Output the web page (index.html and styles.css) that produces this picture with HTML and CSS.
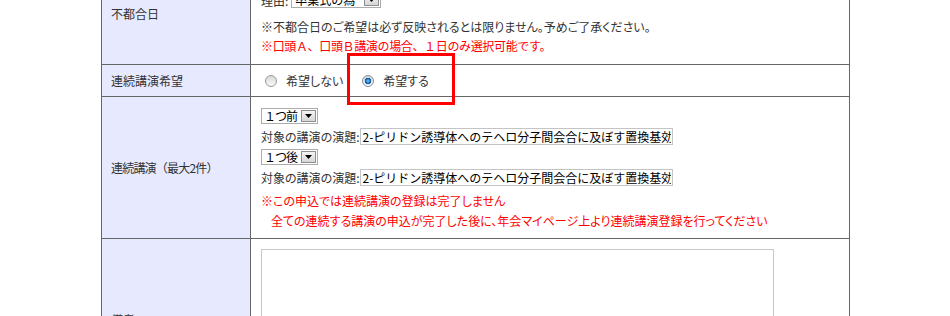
FILE: index.html
```html
<!DOCTYPE html>
<html lang="ja">
<head>
<meta charset="utf-8">
<title>講演申込</title>
<link rel="stylesheet" href="styles.css">
</head>
<body>
<div class="page">
  <div class="form">
    <div class="th">不都合日</div>
    <div class="td td-first">
      <div class="line reason">
        <span class="caption">理由:</span>
        <span class="select select-reason"><span class="sel-text">卒業式の為</span><span class="sel-btn"><svg width="7" height="4" viewBox="0 0 7 4"><polygon points="0,0 7,0 3.5,4" fill="#000"/></svg></span></span>
      </div>
      <p class="note">※不都合日のご希望は必ず反映されるとは限りません。予めご了承ください。</p>
      <p class="note red wide">※口頭Ａ、口頭Ｂ講演の場合、１日のみ選択可能です。</p>
    </div>

    <div class="th">連続講演希望</div>
    <div class="td td-radios">
      <label class="radio"><input type="radio" name="renzoku"><span>希望しない</span></label>
      <label class="radio"><input type="radio" name="renzoku" checked><span>希望する</span></label>
      <span class="annotation"></span>
    </div>

    <div class="th th-wide">連続講演（最大2件）</div>
    <div class="td td-series">
      <div class="line sel-line">
        <span class="select select-order"><span class="sel-text">１つ前</span><span class="sel-btn"><svg width="7" height="4" viewBox="0 0 7 4"><polygon points="0,0 7,0 3.5,4" fill="#000"/></svg></span></span>
      </div>
      <div class="line input-line">
        <span class="caption">対象の講演の演題:</span>
        <input class="title-input" type="text" value="2-ピリドン誘導体へのテヘロ分子間会合に及ぼす置換基効果">
      </div>
      <div class="line sel-line">
        <span class="select select-order"><span class="sel-text">１つ後</span><span class="sel-btn"><svg width="7" height="4" viewBox="0 0 7 4"><polygon points="0,0 7,0 3.5,4" fill="#000"/></svg></span></span>
      </div>
      <div class="line input-line">
        <span class="caption">対象の講演の演題:</span>
        <input class="title-input" type="text" value="2-ピリドン誘導体へのテヘロ分子間会合に及ぼす置換基効果">
      </div>
      <div class="warn">
        <p class="note red">※この申込では連続講演の登録は完了しません</p>
        <p class="note red indent">全ての連続する講演の申込が完了した後に、年会マイページ上より連続講演登録を行ってください</p>
      </div>
    </div>

    <div class="th">備考</div>
    <div class="td td-remarks">
      <textarea class="remarks"></textarea>
    </div>
  </div>
</div>
</body>
</html>
```

FILE: styles.css
```css
html, body {
  margin: 0;
  padding: 0;
  background: #fff;
}

body {
  font-family: "Noto Sans CJK JP", "Noto Sans", sans-serif;
  font-size: 12px;
  color: #333;
  font-feature-settings: "palt";
}

.page {
  margin-top: -39px;
  margin-left: 101px;
  width: 749px;
}

.form {
  display: grid;
  grid-template-columns: 149px 599px;
  border-left: 1px solid #666;
  border-top: 1px solid #666;
}

.th,
.td {
  border-right: 1px solid #666;
  border-bottom: 1px solid #666;
}

.th {
  background: #e7e9fe;
  display: flex;
  align-items: center;
  padding-left: 9px;
  color: #333;
}

.th-wide {
  font-feature-settings: normal;
  letter-spacing: -0.8px;
}

.td {
  padding: 0 10px;
}

.line {
  display: flex;
  align-items: center;
}

.caption {
  white-space: nowrap;
}

.note {
  margin: 0;
  line-height: 19px;
  white-space: nowrap;
}

.red {
  color: #f00;
}

.wide {
  font-feature-settings: normal;
  letter-spacing: -0.35px;
}

/* row 1 */
.td-first {
  padding-top: 28px;
  padding-bottom: 9px;
}

.reason {
  height: 20px;
  margin-bottom: 7px;
}

.select {
  display: inline-flex;
  align-items: center;
  box-sizing: border-box;
  height: 16px;
  border: 1px solid #acacac;
  background: #fff;
  color: #000;
  padding: 0 1px 0 3px;
}

.select-reason {
  width: 90px;
  margin-left: 3px;
}

.select-order {
  width: 57px;
  padding-left: 2px;
}

.sel-text {
  flex: 1;
  line-height: 14px;
  white-space: nowrap;
  font-feature-settings: normal;
}

.select-order .sel-text {
  letter-spacing: -1px;
}

.sel-btn {
  flex: none;
  box-sizing: border-box;
  width: 15px;
  height: 12px;
  border: 1px solid #8e8e8e;
  background: linear-gradient(#f4f4f4, #d6d6d6);
  display: flex;
  align-items: center;
  justify-content: center;
}

.sel-btn svg {
  display: block;
}

/* row 2 */
.td-radios {
  position: relative;
  display: flex;
  align-items: center;
  gap: 15px;
  padding-top: 6px;
  padding-bottom: 6px;
  height: 19px;
}

.radio {
  display: inline-flex;
  align-items: center;
  gap: 9px;
  line-height: 19px;
}

.radio input {
  appearance: none;
  -webkit-appearance: none;
  margin: 0 0 0 4px;
  width: 12px;
  height: 12px;
  box-sizing: border-box;
  border-radius: 50%;
  border: 1px solid #9a9a9a;
  background: linear-gradient(#d8d8d8, #fbfbfb);
}

.radio input:checked {
  border-color: #7f8d9c;
  background:
    radial-gradient(circle, #7fd0ff 0, #2f8fd8 1.5px, #0d4f92 3px, rgba(13, 79, 146, 0) 3.6px),
    linear-gradient(#d8d8d8, #fbfbfb);
}

.annotation {
  position: absolute;
  left: 96px;
  top: -12px;
  width: 108px;
  height: 52px;
  box-sizing: border-box;
  border: 3px solid #f00;
  pointer-events: none;
}

/* row 3 */
.td-series {
  padding-top: 9px;
  padding-bottom: 7px;
}

.sel-line {
  height: 20px;
}

.input-line {
  height: 21px;
}

.title-input {
  box-sizing: border-box;
  width: 313px;
  height: 17px;
  margin: 0 0 0 1px;
  padding: 0 1px;
  border: 1px solid #c4c4c4;
  font-family: "Noto Sans CJK JP", sans-serif;
  font-size: 12px;
  color: #000;
  background: #fff;
  outline: none;
}

.warn {
  margin-top: 3px;
}

.warn .note {
  line-height: 20px;
}

.indent {
  padding-left: 10px;
}

/* row 4 */
.td-remarks {
  padding-top: 10px;
  padding-bottom: 10px;
}

.remarks {
  display: block;
  box-sizing: border-box;
  width: 513px;
  height: 140px;
  margin: 0;
  border: 1px solid #c8c8c8;
  resize: none;
  font-family: "Noto Sans CJK JP", sans-serif;
  font-size: 12px;
}
```
